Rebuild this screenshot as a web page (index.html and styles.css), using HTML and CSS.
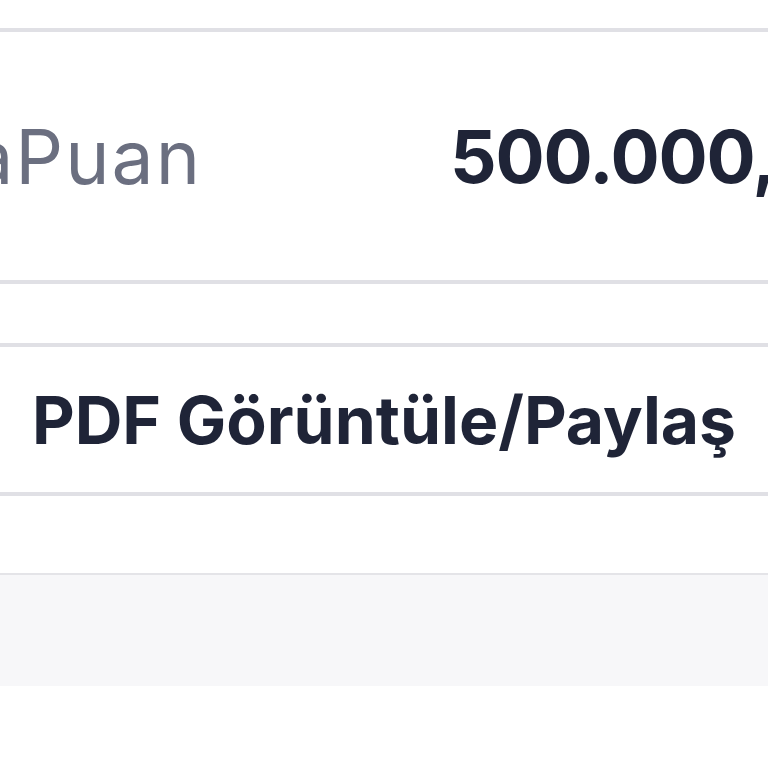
FILE: index.html
```html
<!DOCTYPE html>
<html lang="tr">
<head>
  <meta charset="UTF-8">
  <meta name="viewport" content="width=device-width, initial-scale=1.0">
  <title>ParaPuan</title>
  <link rel="stylesheet" href="styles.css">
</head>
<body>
  <div class="screen">
    <div class="top-space"></div>

    <div class="points-row">
      <span class="points-label">ParaPuan</span>
      <span class="points-value">500.000,00 TL</span>
    </div>

    <div class="spacer"></div>

    <div class="pdf-button">PDF Görüntüle/Paylaş</div>

    <div class="bottom-space"></div>

    <div class="footer-band"></div>
  </div>
</body>
</html>
```

FILE: styles.css
```css
html, body {
  margin: 0;
  padding: 0;
  background: #fff;
  overflow: hidden;
}
body {
  font-family: 'Inter', 'Liberation Sans', sans-serif;
  color: #1f2437;
}
.screen {
  width: 768px;
  height: 768px;
}
.top-space {
  height: 28px;
}
.points-row {
  display: flex;
  align-items: center;
  height: 248px;
  border-top: 4px solid #e0e0e5;
  border-bottom: 4px solid #e0e0e5;
  white-space: nowrap;
}
.points-label {
  flex: 0 0 auto;
  width: 603px;
  margin-left: -153px;
  font-size: 75px;
  font-weight: 400;
  letter-spacing: 2px;
  color: #6b6f80;
}
.points-value {
  font-size: 73px;
  font-weight: 700;
  letter-spacing: -1.2px;
}
.spacer {
  height: 59px;
}
.pdf-button {
  height: 145px;
  display: flex;
  align-items: center;
  justify-content: center;
  border-top: 4px solid #e0e0e5;
  border-bottom: 4px solid #e0e0e5;
  font-size: 66px;
  font-weight: 700;
  white-space: nowrap;
}
.bottom-space {
  height: 77px;
}
.footer-band {
  height: 111px;
  background: #f7f7f9;
  border-top: 2px solid #e4e4e8;
}
```
